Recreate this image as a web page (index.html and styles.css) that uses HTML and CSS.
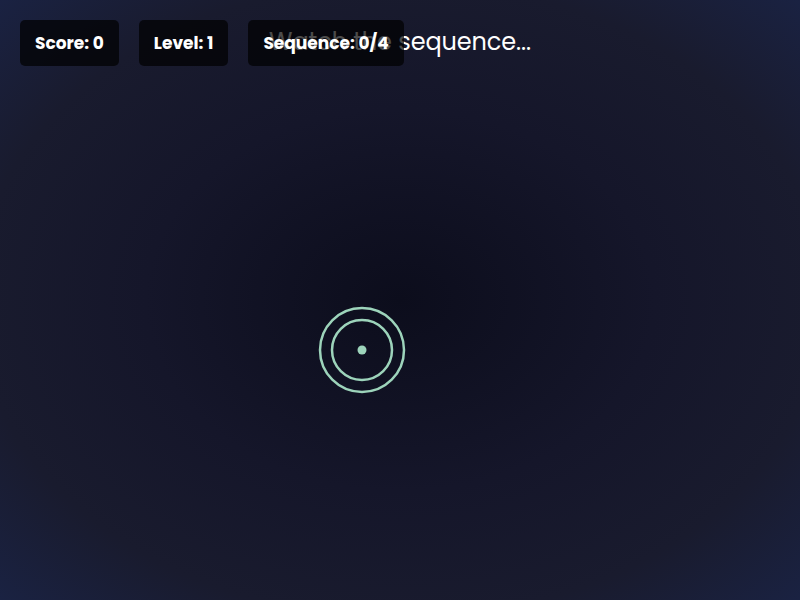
FILE: index.html
```html
<!DOCTYPE html>
<html lang="en">
<head>
    <meta charset="UTF-8">
    <meta name="viewport" content="width=device-width, initial-scale=1.0">
    <title>Memory Targets</title>
    <link rel="stylesheet" href="styles.css">
</head>
<body>

    <div class="game">
        <div class="message">Watch the sequence...</div>

        <div class="hud">
            <div class="stat">Score: 0</div>
            <div class="stat">Level: 1</div>
            <div class="stat">Sequence: 0/4</div>
        </div>

        <div class="target">
            <svg width="88" height="88" viewBox="0 0 88 88">
                <circle cx="44" cy="44" r="42" fill="none" stroke="#9dd4bb" stroke-width="2.5"/>
                <circle cx="44" cy="44" r="30" fill="none" stroke="#9dd4bb" stroke-width="2.5"/>
                <circle cx="44" cy="44" r="4.5" fill="#9dd4bb"/>
            </svg>
        </div>
    </div>

</body>
</html>
```

FILE: styles.css
```css
body {
    font-family: 'Poppins', Inter, 'Open Sans', sans-serif;
    margin: 0;
    height: 100vh;
    overflow: hidden;
    color: white;
    background: radial-gradient(ellipse at center, #0c0d1c 0%, #15162a 45%, #191b2e 75%, #1a2242 100%);
}
.game {
    position: relative;
    height: 100%;
}
.hud {
    position: relative;
    z-index: 2;
    display: flex;
    gap: 20px;
    padding: 20px;
}
.stat {
    background-color: rgba(0, 0, 0, 0.7);
    border-radius: 5px;
    padding: 12px 15px;
    font-size: 17px;
    font-weight: 700;
    line-height: 22px;
}
.message {
    position: absolute;
    top: 26px;
    left: 0;
    right: 0;
    text-align: center;
    font-size: 24px;
    line-height: 32px;
    letter-spacing: -0.1px;
    z-index: 1;
}
.target {
    position: absolute;
    left: 318px;
    top: 306px;
    width: 88px;
    height: 88px;
}
.target svg {
    display: block;
}
```
